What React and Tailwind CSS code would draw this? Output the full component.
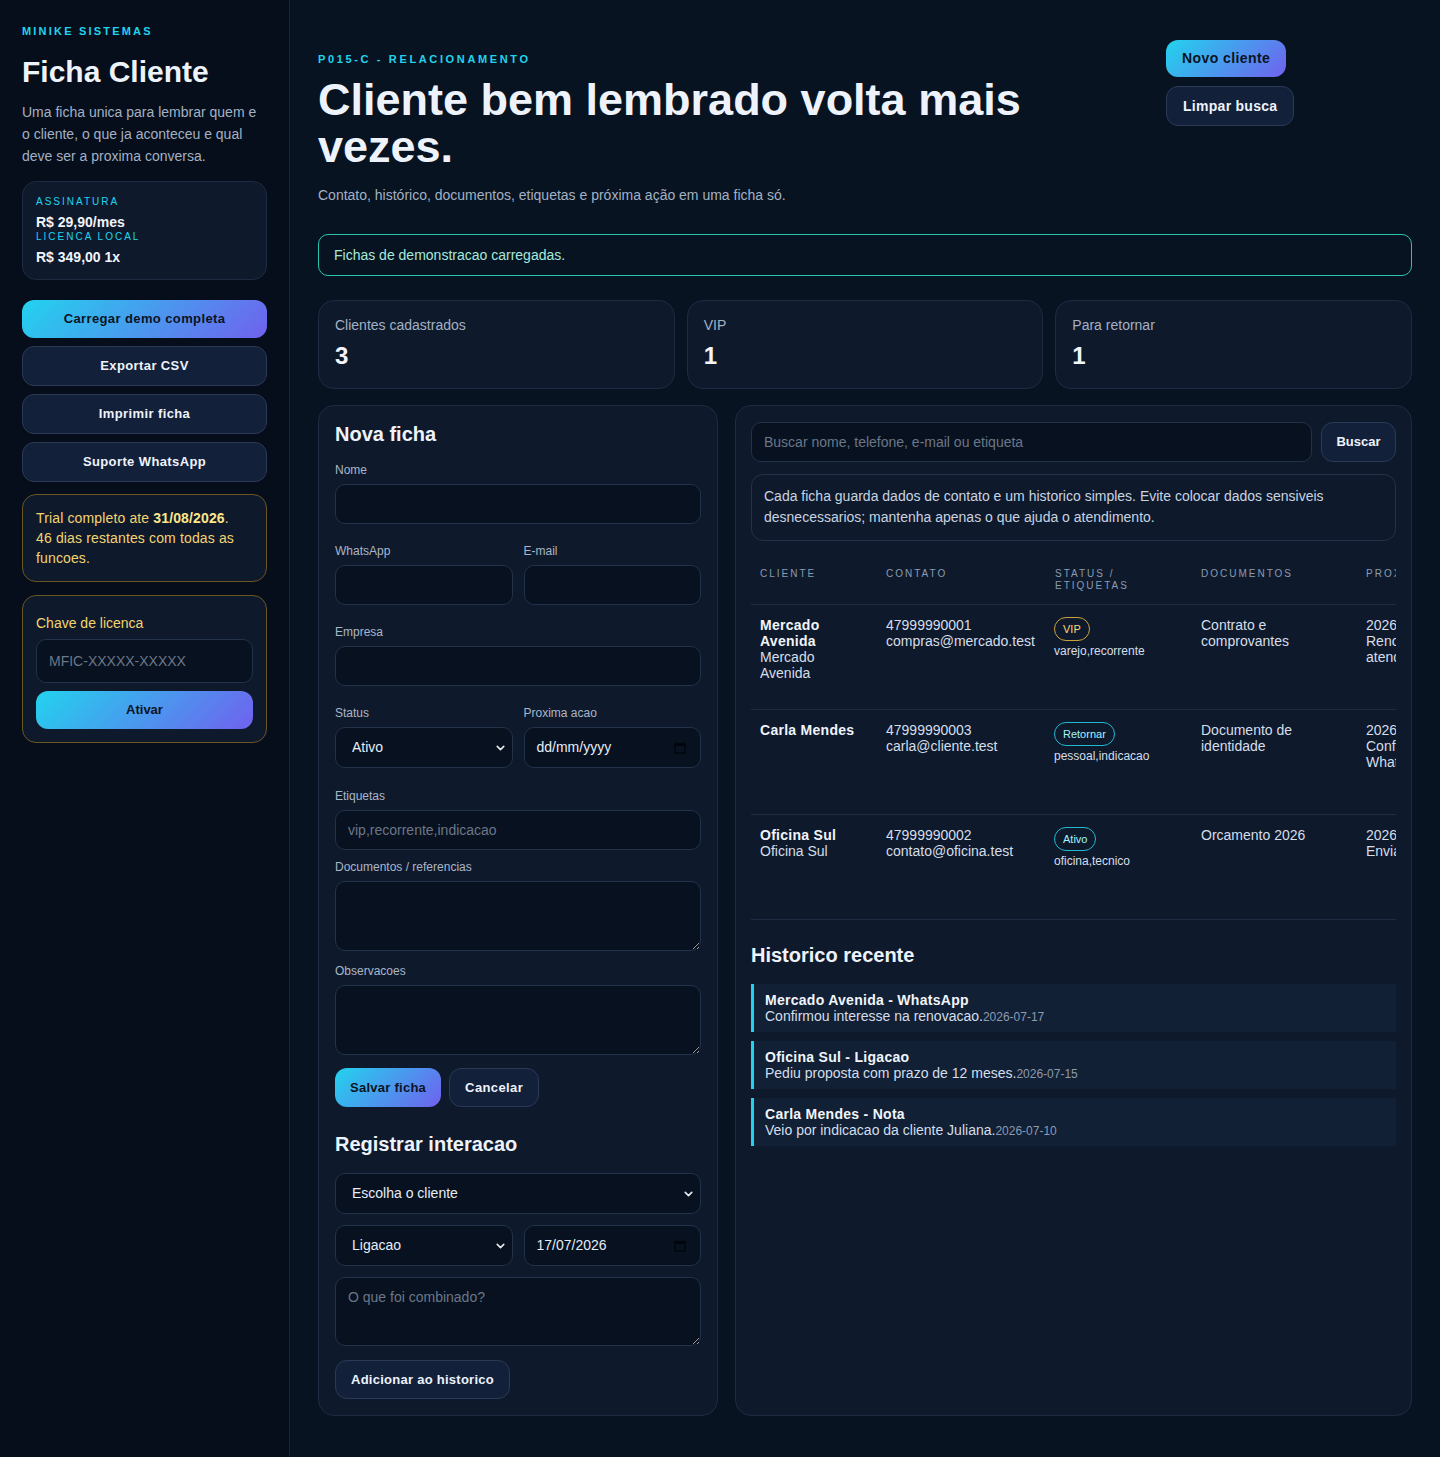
import React from 'react';
import { ChevronDown } from 'lucide-react';

const gradientBtn =
  'bg-[linear-gradient(135deg,#22d3ee,#7061ee)] text-[#0a1424] font-bold rounded-[12px]';
const ghostBtn =
  'border border-[#2a3a56] bg-[#13203a] text-[#eef3fb] font-bold rounded-[12px]';
const inputCls =
  'block w-full rounded-[10px] border border-[#22324a] bg-[#07111f] px-3 text-[14px] text-[#e6edf7] placeholder:text-[#6b7788] outline-none';

const Label = ({ children }) => (
  <label className="block text-[12px] leading-4 text-[#aab6c8]">{children}</label>
);

const Field = ({ label, className = '', children }) => (
  <div className={className}>
    <Label>{label}</Label>
    <div className="mt-[6px]">{children}</div>
  </div>
);

const SelectBox = ({ value }) => (
  <div className="relative">
    <select
      defaultValue={value}
      className="block h-[41px] w-full appearance-none rounded-[10px] border border-[#22324a] bg-[#07111f] pl-4 pr-8 text-[14px] text-[#e6edf7] outline-none"
    >
      <option>{value}</option>
    </select>
    <ChevronDown
      size={13}
      strokeWidth={3}
      className="pointer-events-none absolute right-[6px] top-1/2 -translate-y-1/2 text-[#e5e7eb]"
    />
  </div>
);

const CalendarGlyph = () => (
  <svg width="12" height="12" viewBox="0 0 12 12" fill="none">
    <rect x="1" y="1.5" width="10" height="9.5" stroke="#02060c" strokeWidth="1.2" />
    <rect x="1" y="1.5" width="10" height="2.5" fill="#02060c" />
  </svg>
);

const DateBox = ({ text }) => (
  <div className="flex h-[41px] items-center justify-between rounded-[10px] border border-[#22324a] bg-[#07111f] pl-3 pr-[14px] text-[14px] text-[#e6edf7]">
    <span>{text}</span>
    <CalendarGlyph />
  </div>
);

const Badge = ({ tone, children }) => {
  const cls =
    tone === 'vip'
      ? 'border-[#c9a23c] text-[#fcd97a]'
      : 'border-[#22b8cf] text-[#a5f3fc]';
  return (
    <span className={`inline-flex h-6 items-center rounded-full border px-2 text-[11px] ${cls}`}>
      {children}
    </span>
  );
};

const clients = [
  {
    name: 'Mercado Avenida',
    company: 'Mercado Avenida',
    phone: '47999990001',
    email: 'compras@mercado.test',
    status: 'VIP',
    tone: 'vip',
    tags: 'varejo,recorrente',
    docs: 'Contrato e comprovantes',
    next: '2026-07-20',
    note: 'Renovar atendimento',
  },
  {
    name: 'Carla Mendes',
    company: '',
    phone: '47999990003',
    email: 'carla@cliente.test',
    status: 'Retornar',
    tone: 'cyan',
    tags: 'pessoal,indicacao',
    docs: 'Documento de identidade',
    next: '2026-07-18',
    note: 'Confirmar WhatsApp',
  },
  {
    name: 'Oficina Sul',
    company: 'Oficina Sul',
    phone: '47999990002',
    email: 'contato@oficina.test',
    status: 'Ativo',
    tone: 'cyan',
    tags: 'oficina,tecnico',
    docs: 'Orcamento 2026',
    next: '2026-07-22',
    note: 'Enviar proposta',
  },
];

const history = [
  { title: 'Mercado Avenida - WhatsApp', text: 'Confirmou interesse na renovacao.', date: '2026-07-17' },
  { title: 'Oficina Sul - Ligacao', text: 'Pediu proposta com prazo de 12 meses.', date: '2026-07-15' },
  { title: 'Carla Mendes - Nota', text: 'Veio por indicacao da cliente Juliana.', date: '2026-07-10' },
];

const stats = [
  { label: 'Clientes cadastrados', value: 3 },
  { label: 'VIP', value: 1 },
  { label: 'Para retornar', value: 1 },
];

const Sidebar = () => (
  <aside className="w-[290px] shrink-0 border-r border-[#18243a] bg-[#050e1a] px-[22px] pt-[23px]">
    <p className="text-[11px] font-bold leading-4 tracking-[0.2em] text-[#22d3ee]">MINIKE SISTEMAS</p>
    <h1 className="mt-[15px] text-[30px] font-bold leading-9 text-[#eef3fb]">Ficha Cliente</h1>
    <p className="mt-[11px] text-[14px] leading-[22px] text-[#a3b1c4]">
      Uma ficha unica para lembrar quem e o cliente, o que ja aconteceu e qual deve ser a proxima conversa.
    </p>

    <div className="mt-[14px] rounded-[14px] border border-[#1d2b42] bg-[#0e1a2c] px-[13px] pt-[13px] pb-[14px]">
      <p className="text-[10px] leading-[14px] tracking-[0.2em] text-[#22d3ee]">ASSINATURA</p>
      <p className="mt-[5px] text-[14px] font-bold leading-4 text-[#f1f5fb]">R$ 29,90/mes</p>
      <p className="text-[10px] leading-[14px] tracking-[0.2em] text-[#22d3ee]">LICENCA LOCAL</p>
      <p className="mt-[5px] text-[14px] font-bold leading-4 text-[#f1f5fb]">R$ 349,00 1x</p>
    </div>

    <div className="mt-5 flex flex-col gap-2">
      <button className={`h-[38px] text-[13px] tracking-[0.03em] ${gradientBtn}`}>Carregar demo completa</button>
      <button className={`h-10 text-[13px] tracking-[0.03em] ${ghostBtn}`}>Exportar CSV</button>
      <button className={`h-10 text-[13px] tracking-[0.03em] ${ghostBtn}`}>Imprimir ficha</button>
      <button className={`h-10 text-[13px] tracking-[0.03em] ${ghostBtn}`}>Suporte WhatsApp</button>
    </div>

    <div className="mt-3 rounded-[14px] border border-[#6b5622] bg-[#0e1a2c] px-[13px] py-[13px] text-[14px] leading-5 tracking-[0.01em] text-[#f3d370]">
      Trial completo ate <b className="text-[#fde68a]">31/08/2026</b>.
      <br />
      46 dias restantes com todas as funcoes.
    </div>

    <div className="mt-[13px] rounded-[14px] border border-[#6b5622] bg-[#0e1a2c] px-[13px] pt-[17px] pb-[13px]">
      <label className="block text-[14px] leading-5 text-[#f3d370]">Chave de licenca</label>
      <input className={`mt-[6px] h-11 ${inputCls}`} placeholder="MFIC-XXXXX-XXXXX" />
      <button className={`mt-2 h-[38px] w-full text-[13px] ${gradientBtn}`}>Ativar</button>
    </div>
  </aside>
);

const NewClientPanel = () => (
  <section className="rounded-[16px] border border-[#1d2b42] bg-[#0e1a2c] px-4 pt-[14px] pb-4">
    <h2 className="text-[20px] font-bold leading-7 text-[#eef3fb]">Nova ficha</h2>
    <Field label="Nome" className="mt-[14px]">
      <input className={`h-10 ${inputCls}`} />
    </Field>
    <div className="mt-[19px] grid grid-cols-2 gap-[11px]">
      <Field label="WhatsApp">
        <input className={`h-10 ${inputCls}`} />
      </Field>
      <Field label="E-mail">
        <input className={`h-10 ${inputCls}`} />
      </Field>
    </div>
    <Field label="Empresa" className="mt-[19px]">
      <input className={`h-10 ${inputCls}`} />
    </Field>
    <div className="mt-[19px] grid grid-cols-2 gap-[11px]">
      <Field label="Status">
        <SelectBox value="Ativo" />
      </Field>
      <Field label="Proxima acao">
        <DateBox text="dd/mm/yyyy" />
      </Field>
    </div>
    <Field label="Etiquetas" className="mt-5">
      <input className={`h-10 ${inputCls}`} placeholder="vip,recorrente,indicacao" />
    </Field>
    <Field label="Documentos / referencias" className="mt-[9px]">
      <textarea className={`h-[70px] py-2 ${inputCls}`} />
    </Field>
    <Field label="Observacoes" className="mt-3">
      <textarea className={`h-[70px] py-2 ${inputCls}`} />
    </Field>
    <div className="mt-[13px] flex gap-2">
      <button className={`h-[39px] px-[15px] text-[13px] tracking-[0.02em] ${gradientBtn}`}>Salvar ficha</button>
      <button className={`h-[39px] px-[15px] text-[13px] tracking-[0.03em] ${ghostBtn}`}>Cancelar</button>
    </div>

    <h2 className="mt-[23px] text-[20px] font-bold leading-7 text-[#eef3fb]">Registrar interacao</h2>
    <div className="mt-[15px]">
      <SelectBox value="Escolha o cliente" />
    </div>
    <div className="mt-[11px] grid grid-cols-2 gap-[11px]">
      <SelectBox value="Ligacao" />
      <DateBox text="17/07/2026" />
    </div>
    <textarea className={`mt-[11px] h-[69px] py-[9px] ${inputCls}`} placeholder="O que foi combinado?" />
    <button className={`mt-[14px] h-[39px] px-[15px] text-[13px] tracking-[0.02em] ${ghostBtn}`}>
      Adicionar ao historico
    </button>
  </section>
);

const ClientsPanel = () => (
  <section className="min-w-0 rounded-[16px] border border-[#1d2b42] bg-[#0e1a2c] px-[15px] pt-4 pb-4">
    <div className="flex gap-[9px]">
      <input className={`h-10 min-w-0 flex-1 ${inputCls}`} placeholder="Buscar nome, telefone, e-mail ou etiqueta" />
      <button className={`h-10 w-[75px] shrink-0 text-[13px] ${ghostBtn}`}>Buscar</button>
    </div>
    <div className="mt-3 rounded-[12px] border border-[#22324a] px-[12px] pt-[11px] pb-[12px] text-[14px] leading-[21px] text-[#c9d3e0]">
      Cada ficha guarda dados de contato e um historico simples. Evite colocar dados sensiveis desnecessarios;
      mantenha apenas o que ajuda o atendimento.
    </div>

    <div className="mt-[15px] overflow-hidden">
      <table className="w-[736px] table-fixed border-collapse text-left">
        <colgroup>
          <col className="w-[126px]" />
          <col className="w-[169px]" />
          <col className="w-[146px]" />
          <col className="w-[165px]" />
          <col className="w-[130px]" />
        </colgroup>
        <thead>
          <tr className="border-b border-[#1e2d44]">
            {['CLIENTE', 'CONTATO', 'STATUS / ETIQUETAS', 'DOCUMENTOS', 'PROXIMA ACAO'].map((h) => (
              <th
                key={h}
                className="py-3 pl-[9px] pr-[9px] align-top text-[10px] font-normal leading-3 tracking-[0.2em] text-[#8b9bb0]"
              >
                {h}
              </th>
            ))}
          </tr>
        </thead>
        <tbody className="text-[14px] leading-4 text-[#d5deea]">
          {clients.map((c) => (
            <tr key={c.name} className="border-b border-[#1e2d44]">
              <td className="h-[105px] pt-3 pl-[9px] pr-[12px] align-top">
                <div className="font-bold tracking-[0.02em] text-[#f1f5fb]">{c.name}</div>
                {c.company && <div>{c.company}</div>}
              </td>
              <td className="pt-3 pl-[9px] pr-[4px] align-top">
                <div>{c.phone}</div>
                <div>{c.email}</div>
              </td>
              <td className="pt-3 pl-[8px] pr-[9px] align-top">
                <Badge tone={c.tone}>{c.status}</Badge>
                <div className="mt-[2px] text-[12px]">{c.tags}</div>
              </td>
              <td className="pt-3 pl-[9px] pr-[9px] align-top">{c.docs}</td>
              <td className="pt-3 pl-[9px] pr-[9px] align-top">
                <div>{c.next}</div>
                <div>{c.note}</div>
              </td>
            </tr>
          ))}
        </tbody>
      </table>
    </div>

    <h2 className="mt-[21px] text-[20px] font-bold leading-7 text-[#eef3fb]">Historico recente</h2>
    <div className="mt-[15px] flex flex-col gap-[9px]">
      {history.map((h) => (
        <div key={h.title} className="border-l-[3px] border-[#22d3ee] bg-[#112035] pl-[11px] pt-2 pb-[7px]">
          <p className="text-[14px] font-bold leading-4 tracking-[0.02em] text-[#f1f5fb]">{h.title}</p>
          <p className="text-[14px] leading-4 text-[#d5deea]">
            {h.text}
            <span className="text-[12px] text-[#8c9ab0]">{h.date}</span>
          </p>
        </div>
      ))}
    </div>
  </section>
);

export default function App() {
  return (
    <div className="flex min-h-screen bg-[#081321] font-['Liberation_Sans',Arial,sans-serif]">
      <Sidebar />
      <main className="min-w-0 flex-1 px-7 pt-10 pb-10">
        <header className="flex gap-6">
          <div className="min-w-0 flex-1 pt-[11px]">
            <p className="text-[11px] font-bold leading-4 tracking-[0.24em] text-[#22d3ee]">P015-C - RELACIONAMENTO</p>
            <h1 className="mt-[9px] text-[45px] font-bold leading-[47px] text-[#eef3fb]">
              Cliente bem lembrado volta mais vezes.
            </h1>
            <p className="mt-[15px] text-[14px] leading-5 text-[#a3b1c4]">
              Contato, histórico, documentos, etiquetas e próxima ação em uma ficha só.
            </p>
          </div>
          <div className="flex w-[246px] shrink-0 flex-col items-start gap-[9px]">
            <button className={`h-[37px] px-4 text-[14px] tracking-[0.03em] ${gradientBtn}`}>Novo cliente</button>
            <button className={`h-10 px-4 text-[14px] tracking-[0.02em] ${ghostBtn}`}>Limpar busca</button>
          </div>
        </header>

        <div className="mt-[29px] flex h-[42px] items-center rounded-[10px] border border-[#2bc4ad] px-[15px] text-[14px] text-[#a7e8dc]">
          Fichas de demonstracao carregadas.
        </div>

        <div className="mt-6 grid grid-cols-3 gap-3">
          {stats.map((s) => (
            <div key={s.label} className="h-[89px] rounded-[16px] border border-[#1d2b42] bg-[#0e1a2c] px-4 pt-[14px]">
              <p className="text-[14px] leading-5 text-[#a3b1c4]">{s.label}</p>
              <p className="mt-[5px] text-[24px] font-bold leading-8 text-[#f1f5fb]">{s.value}</p>
            </div>
          ))}
        </div>

        <div className="mt-4 grid grid-cols-[400px_minmax(0,1fr)] gap-[17px]">
          <NewClientPanel />
          <ClientsPanel />
        </div>
      </main>
    </div>
  );
}
